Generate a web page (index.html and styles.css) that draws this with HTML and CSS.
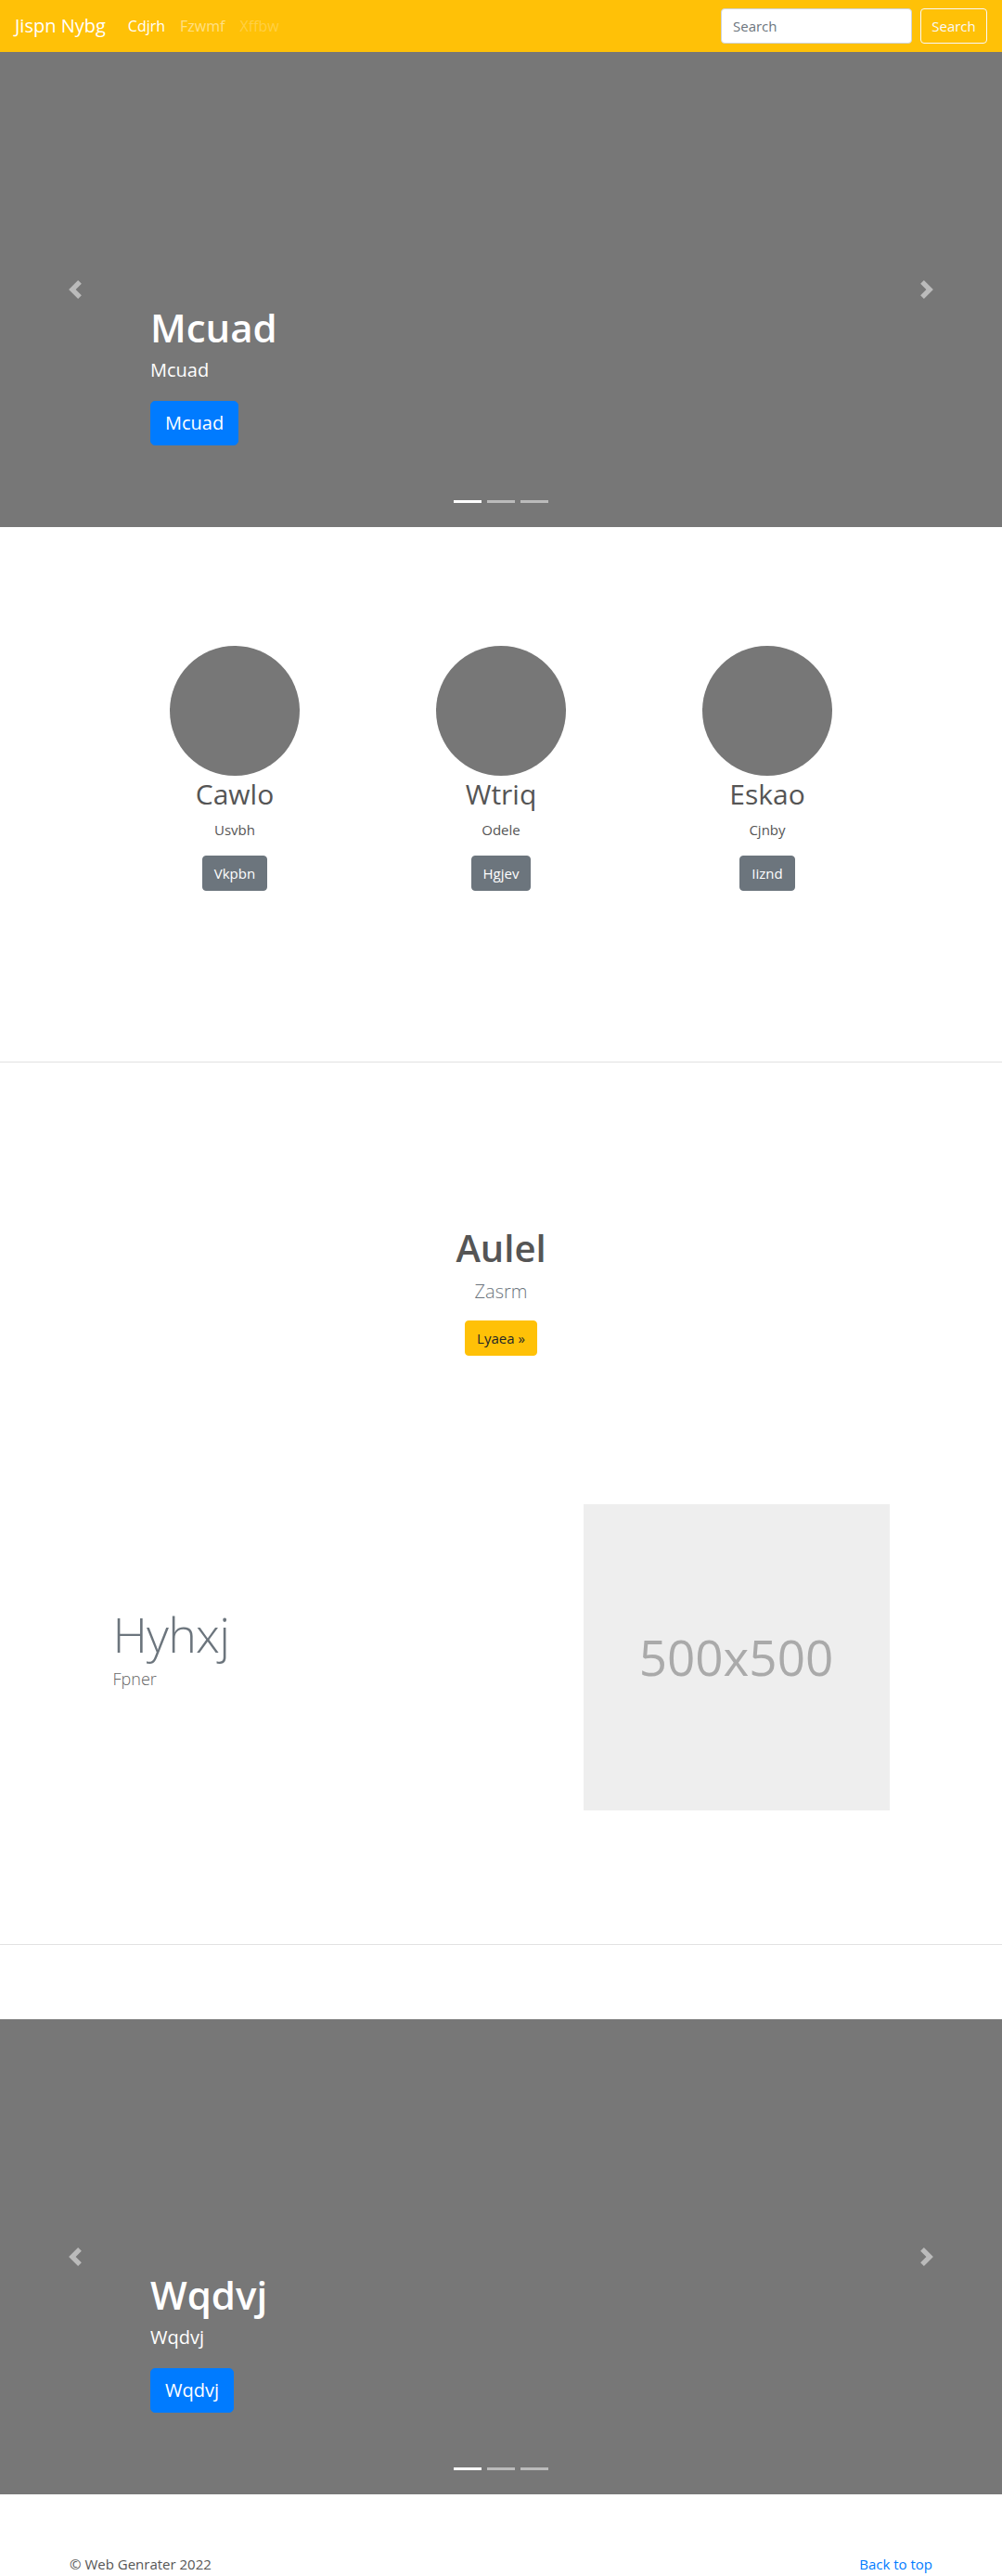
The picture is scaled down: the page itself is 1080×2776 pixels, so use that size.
FILE: index.html
```html
<!DOCTYPE html>
<html lang="en">
<head>
<meta charset="utf-8">
<title>Jispn Nybg</title>
<link rel="stylesheet" href="styles.css">
</head>
<body>
<header class="navbar">
  <a class="brand" href="#">Jispn Nybg</a>
  <nav class="nav">
    <a class="nav-link active" href="#">Cdjrh</a>
    <a class="nav-link" href="#">Fzwmf</a>
    <a class="nav-link disabled" href="#">Xffbw</a>
  </nav>
  <form class="search">
    <input class="search-input" type="text" placeholder="Search">
    <button class="search-btn" type="button">Search</button>
  </form>
</header>

<section class="carousel">
  <span class="control prev"><svg viewBox="0 0 8 8" width="20" height="20"><path d="M5.25 0l-4 4 4 4 1.5-1.5L4.25 4l2.5-2.5L5.25 0z"/></svg></span>
  <span class="control next"><svg viewBox="0 0 8 8" width="20" height="20"><path d="M2.75 0l-1.5 1.5L3.75 4l-2.5 2.5L2.75 8l4-4-4-4z"/></svg></span>
  <div class="caption">
    <h1 class="caption-title">Mcuad</h1>
    <p class="caption-text">Mcuad</p>
    <a class="btn-primary" href="#">Mcuad</a>
  </div>
  <ol class="indicators">
    <li class="ind active"></li>
    <li class="ind"></li>
    <li class="ind"></li>
  </ol>
</section>

<section class="marketing">
  <div class="col">
    <div class="circle"></div>
    <h2 class="name">Cawlo</h2>
    <p class="sub">Usvbh</p>
    <a class="btn-secondary" href="#">Vkpbn</a>
  </div>
  <div class="col">
    <div class="circle"></div>
    <h2 class="name">Wtriq</h2>
    <p class="sub">Odele</p>
    <a class="btn-secondary" href="#">Hgjev</a>
  </div>
  <div class="col">
    <div class="circle"></div>
    <h2 class="name">Eskao</h2>
    <p class="sub">Cjnby</p>
    <a class="btn-secondary" href="#">Iiznd</a>
  </div>
</section>

<hr class="divider">

<section class="intro">
  <h1 class="intro-title">Aulel</h1>
  <p class="intro-lead">Zasrm</p>
  <a class="btn-warning" href="#">Lyaea »</a>
</section>

<section class="featurette">
  <div class="feat-text">
    <h2 class="feat-heading">Hyhxj</h2>
    <p class="feat-lead">Fpner</p>
  </div>
  <div class="placeholder">500x500</div>
</section>

<hr class="divider divider-2">

<section class="carousel carousel-2">
  <span class="control prev"><svg viewBox="0 0 8 8" width="20" height="20"><path d="M5.25 0l-4 4 4 4 1.5-1.5L4.25 4l2.5-2.5L5.25 0z"/></svg></span>
  <span class="control next"><svg viewBox="0 0 8 8" width="20" height="20"><path d="M2.75 0l-1.5 1.5L3.75 4l-2.5 2.5L2.75 8l4-4-4-4z"/></svg></span>
  <div class="caption">
    <h1 class="caption-title">Wqdvj</h1>
    <p class="caption-text">Wqdvj</p>
    <a class="btn-primary" href="#">Wqdvj</a>
  </div>
  <ol class="indicators">
    <li class="ind active"></li>
    <li class="ind"></li>
    <li class="ind"></li>
  </ol>
</section>

<footer class="footer">
  <p class="copy">© Web Genrater 2022</p>
  <a class="back" href="#">Back to top</a>
</footer>
</body>
</html>
```

FILE: styles.css
```css
* { box-sizing: border-box; }

html, body {
  margin: 0;
  padding: 0;
}

body {
  font-family: "Open Sans", "Noto Sans", sans-serif;
  font-size: 16px;
  line-height: 1.5;
  color: #212529;
  background: #fff;
}

a { text-decoration: none; }

/* Navbar */
.navbar {
  display: flex;
  align-items: center;
  height: 56px;
  padding: 8px 16px;
  background: #ffc107;
}

.brand {
  font-size: 20px;
  line-height: 30px;
  padding: 5px 0;
  margin-right: 16px;
  color: #fff;
}

.nav {
  display: flex;
  flex: 1;
}

.nav-link {
  padding: 8px;
  font-size: 16px;
  line-height: 24px;
  color: rgba(255, 255, 255, 0.5);
}

.nav-link.active { color: #fff; }
.nav-link.disabled { color: rgba(255, 255, 255, 0.25); }

.search {
  display: flex;
  align-items: center;
}

.search-input {
  width: 206px;
  height: 38px;
  margin-right: 9px;
  padding: 6px 12px;
  font-family: inherit;
  font-size: 15px;
  color: #495057;
  background: #fff;
  border: 1px solid #ced4da;
  border-radius: 4px;
}

.search-input::placeholder { color: #6c757d; }

.search-btn {
  width: 72px;
  height: 38px;
  padding: 0;
  font-family: inherit;
  font-size: 15px;
  color: #f8f9fa;
  background: transparent;
  border: 1px solid #f8f9fa;
  border-radius: 4px;
}

/* Carousel */
.carousel {
  position: relative;
  height: 512px;
  background: #777;
  overflow: hidden;
}

.control {
  position: absolute;
  top: 246px;
  width: 20px;
  height: 20px;
  fill: #fff;
  opacity: 0.5;
}

.control svg { display: block; }

.control.prev { left: 71px; }
.control.next { right: 71px; }

.caption {
  position: absolute;
  left: 15%;
  right: 15%;
  bottom: 88px;
  display: flex;
  flex-direction: column;
  align-items: flex-start;
  color: #fff;
}

.caption-title {
  margin: 0 0 6px;
  font-size: 42px;
  line-height: 50px;
  font-weight: 600;
}

.caption-text {
  margin: 0 0 18px;
  font-size: 20px;
  line-height: 30px;
}

.btn-primary {
  display: inline-block;
  padding: 8px 15px;
  font-size: 20px;
  line-height: 30px;
  color: #fff;
  background: #007bff;
  border: 1px solid #007bff;
  border-radius: 5px;
}

.indicators {
  position: absolute;
  left: 0;
  right: 0;
  bottom: 26px;
  margin: 0;
  padding: 0;
  list-style: none;
  display: flex;
  justify-content: center;
  gap: 6px;
}

.ind {
  width: 30px;
  height: 3px;
  background: rgba(255, 255, 255, 0.5);
}

.ind.active { background: #fff; }

/* Marketing */
.marketing {
  display: grid;
  grid-template-columns: repeat(3, 287px);
  justify-content: center;
  padding: 128px 0 184px;
}

.col {
  display: flex;
  flex-direction: column;
  align-items: center;
  text-align: center;
}

.circle {
  width: 140px;
  height: 140px;
  border-radius: 50%;
  background: #777;
}

.name {
  margin: 2px 0 0;
  font-size: 30px;
  line-height: 36px;
  font-weight: 400;
  color: #555;
}

.sub {
  margin: 9px 0 0;
  font-size: 15px;
  line-height: 22px;
  color: #555;
}

.btn-secondary {
  display: inline-block;
  margin-top: 17px;
  padding: 6px 12px;
  font-size: 15px;
  line-height: 24px;
  color: #fff;
  background: #6c757d;
  border: 1px solid #6c757d;
  border-radius: 4px;
}

/* Dividers */
.divider {
  margin: 0;
  height: 0;
  border: 0;
  border-top: 1px solid #e2e2e2;
}

/* Intro */
.intro {
  display: flex;
  flex-direction: column;
  align-items: center;
  padding-top: 176px;
}

.intro-title {
  margin: 0;
  font-size: 40px;
  line-height: 48px;
  font-weight: 600;
  color: #555;
}

.intro-lead {
  margin: 8px 0 0;
  font-size: 20px;
  line-height: 30px;
  font-weight: 300;
  color: #6c757d;
}

.btn-warning {
  display: inline-block;
  margin-top: 16px;
  padding: 6px 12px;
  font-size: 15px;
  line-height: 24px;
  color: #212529;
  background: #ffc107;
  border: 1px solid #ffc107;
  border-radius: 4px;
}

/* Featurette */
.featurette {
  display: grid;
  grid-template-columns: 477px 330px;
  column-gap: 30px;
  align-items: center;
  width: 837px;
  margin: 160px auto 144px;
}

.feat-heading {
  margin: 0 0 10px;
  font-size: 52px;
  line-height: 52px;
  font-weight: 300;
  letter-spacing: -0.8px;
  color: #6c757d;
}

.feat-lead {
  margin: 0 0 16px;
  font-size: 18px;
  line-height: 25px;
  font-weight: 300;
  color: #666;
}

.placeholder {
  display: flex;
  align-items: center;
  justify-content: center;
  width: 330px;
  height: 330px;
  background: #eee;
  color: #aaa;
  font-size: 53px;
}

.carousel-2 { margin-top: 80px; }

/* Footer */
.footer {
  display: flex;
  justify-content: space-between;
  align-items: baseline;
  max-width: 960px;
  margin: 0 auto;
  padding: 64px 15px 32px;
  font-size: 15px;
  line-height: 22px;
}

.copy {
  margin: 0;
  color: #555;
}

.back { color: #007bff; }
```
